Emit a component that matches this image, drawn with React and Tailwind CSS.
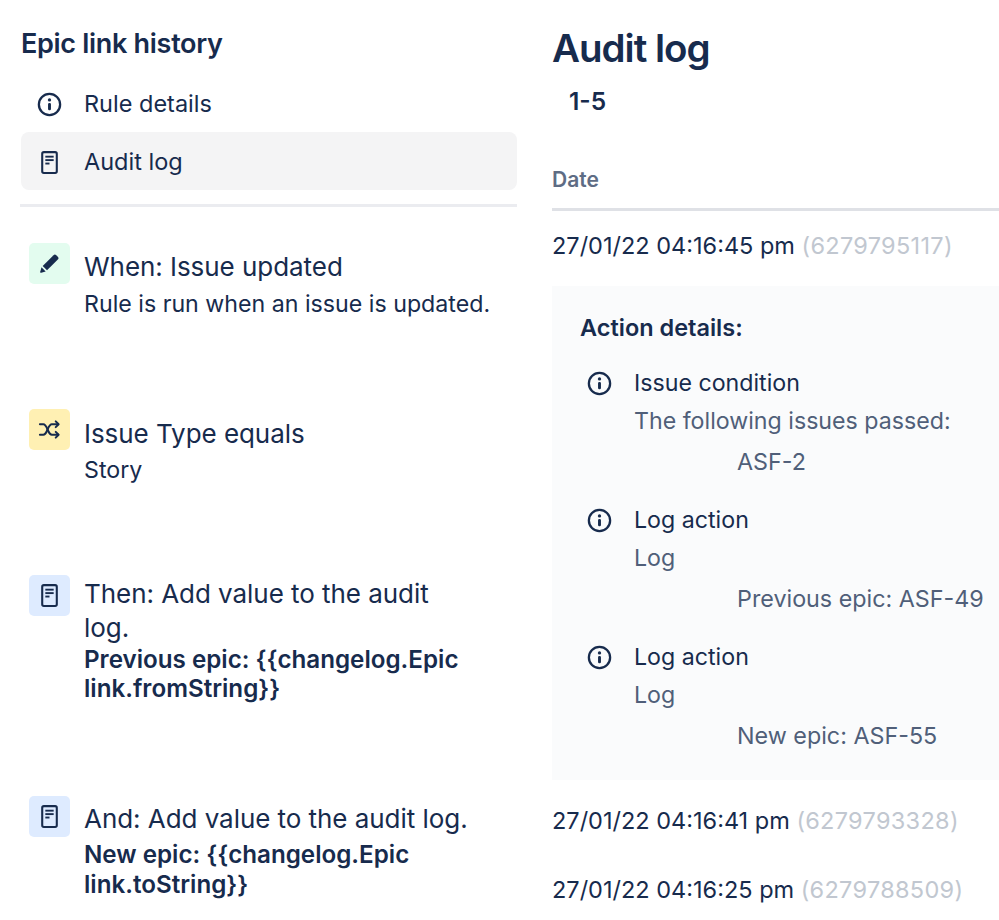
const navy = "text-[#172b4d]";

function InfoIcon({ className = "" }) {
  return (
    <svg viewBox="0 0 24 24" className={className} fill="none">
      <circle cx="12" cy="12" r="10.2" stroke="#172b4d" strokeWidth="2.2" />
      <rect x="10.6" y="10.6" width="2.8" height="7" rx="1.2" fill="#172b4d" />
      <circle cx="12" cy="7.6" r="1.6" fill="#172b4d" />
    </svg>
  );
}

function PageIcon({ className = "" }) {
  return (
    <svg viewBox="0 0 24 24" className={className} fill="none">
      <rect x="5" y="2" width="14" height="20" rx="1.6" stroke="#172b4d" strokeWidth="2" />
      <rect x="8" y="5.5" width="8" height="1.8" fill="#172b4d" />
      <rect x="8" y="8.8" width="8" height="1.8" fill="#172b4d" />
      <rect x="8" y="12.1" width="4" height="1.8" fill="#172b4d" />
    </svg>
  );
}

function PencilIcon({ className = "" }) {
  return (
    <svg viewBox="0 0 24 24" className={className}>
      <path d="M16.2 3.3a2 2 0 0 1 2.8 0l1.7 1.7a2 2 0 0 1 0 2.8L9.4 19.1 4.9 14.6z" fill="#172b4d" />
      <path d="M3.7 16 8 20.3l-4.6 1.4a.9.9 0 0 1-1.1-1.1z" fill="#172b4d" />
    </svg>
  );
}

function ShuffleIcon({ className = "" }) {
  return (
    <svg viewBox="0 0 24 24" className={className} fill="none" stroke="#172b4d" strokeWidth="2.1" strokeLinecap="round" strokeLinejoin="round">
      <path d="M2 6.5h3.5c4.5 0 4.5 11 9 11H21" />
      <path d="M2 17.5h3.5c4.5 0 4.5-11 9-11H21" />
      <path d="M18.5 3.5l3 3-3 3" />
      <path d="M18.5 14.5l3 3-3 3" />
    </svg>
  );
}

function Badge({ bg, children }) {
  return (
    <div className={`w-[41px] h-[41px] shrink-0 rounded-[5px] flex items-center justify-center ${bg}`}>
      {children}
    </div>
  );
}

function Step({ bg, icon, title, children, className = "", bodyClass = "" }) {
  return (
    <div className={`flex pl-2 ${className}`}>
      <Badge bg={bg}>{icon}</Badge>
      <div className={`ml-[14px] min-w-0 ${bodyClass}`}>
        <div className="text-[26px] leading-[34px] tracking-[-0.05px] w-[385px]">{title}</div>
        {children}
      </div>
    </div>
  );
}

function ActionRow({ title, sub, detail }) {
  return (
    <div className="flex h-[137px]">
      <div className="w-[82px] pl-[35px] pt-[7px] shrink-0">
        <InfoIcon className="w-[25px] h-[25px]" />
      </div>
      <div className="min-w-0">
        <div className={`text-[23.2px] leading-[38px] ${navy}`}>{title}</div>
        <div className="text-[23.2px] leading-[38px] text-[#505f79]">{sub}</div>
        <div className="text-[23.3px] leading-[38px] mt-[3px] ml-[103px] whitespace-nowrap text-[#505f79]">{detail}</div>
      </div>
    </div>
  );
}

function LogRow({ date, id, className = "" }) {
  return (
    <div className={`text-[23.5px] leading-[32px] whitespace-nowrap ${navy} ${className}`}>
      {date} <span className="text-[#c1c7d0] tracking-[0.3px]">({id})</span>
    </div>
  );
}

export default function App() {
  return (
    <div className={`w-[999px] h-[920px] overflow-hidden bg-white flex ${navy}`} style={{ fontFamily: "Inter, 'Noto Sans', sans-serif" }}>
      <div className="w-[497px] ml-[20px] shrink-0 pt-[27px]">
        <h2 className="ml-px text-[27px] leading-[34px] font-semibold tracking-[-0.3px]">Epic link history</h2>
        <div className="mt-[14px] h-[57px] pt-px flex items-center pl-[17px]">
          <InfoIcon className="w-[25px] h-[25px]" />
          <span className="ml-[22px] text-[23.5px]">Rule details</span>
        </div>
        <div className="ml-px h-[58px] pt-[2px] flex items-center pl-[16px] bg-[#f4f4f5] rounded-[8px]">
          <PageIcon className="w-[25px] h-[25px]" />
          <span className="ml-[22px] text-[23.5px]">Audit log</span>
        </div>
        <div className="mt-[14px] h-[3px] bg-[#ebecf0]" />

        <Step
          className="mt-[36px] ml-px"
          bodyClass="pt-[7px]"
          bg="bg-[#e3fcef]"
          icon={<PencilIcon className="w-[23px] h-[23px]" />}
          title="When: Issue updated"
        >
          <div className="mt-[2px] text-[23.2px] leading-[36px] whitespace-nowrap">Rule is run when an issue is updated.</div>
        </Step>

        <Step
          className="mt-[87px] ml-px"
          bodyClass="pt-[8px]"
          bg="bg-[#fff0b3]"
          icon={<ShuffleIcon className="w-[23px] h-[23px]" />}
          title="Issue Type equals"
        >
          <div className="mt-[1px] text-[23.2px] leading-[36px]">Story</div>
        </Step>

        <Step
          className="mt-[87px] ml-px"
          bodyClass="pt-[2px]"
          bg="bg-[#deebff]"
          icon={<PageIcon className="w-[25px] h-[25px]" />}
          title="Then: Add value to the audit log."
        >
          <div className="text-[24.2px] leading-[29px] font-semibold w-[400px]">Previous epic: {"{{changelog.Epic link.fromString}}"}</div>
        </Step>

        <Step
          className="mt-[93px] ml-px"
          bodyClass="pt-[6px]"
          bg="bg-[#deebff]"
          icon={<PageIcon className="w-[25px] h-[25px]" />}
          title="And: Add value to the audit log."
        >
          <div className="mt-[4px] text-[24.2px] leading-[30px] font-semibold w-[400px]">New epic: {"{{changelog.Epic link.toString}}"}</div>
        </Step>
      </div>

      <div className="ml-[35px] flex-1 min-w-0 pt-[22px]">
        <h1 className="text-[38.5px] leading-[52px] font-semibold tracking-[-1px]">Audit log</h1>
        <div className="mt-[11px] ml-[17px] text-[24.5px] leading-[32px] font-semibold">1-5</div>
        <div className="mt-[49px] text-[21px] leading-[28px] font-semibold text-[#5e6c84]">Date</div>
        <div className="mt-[14px] h-[3px] bg-[#dfe1e6]" />
        <LogRow className="mt-[19px]" date="27/01/22 04:16:45 pm" id="6279795117" />
        <div className="mt-[24px] h-[494px] bg-[#fafbfc] pt-[26px]">
          <div className="ml-[28px] text-[23.5px] leading-[32px] font-semibold">Action details:</div>
          <div className="mt-[20px]">
            <ActionRow title="Issue condition" sub="The following issues passed:" detail="ASF-2" />
            <ActionRow title="Log action" sub="Log" detail="Previous epic: ASF-49" />
            <ActionRow title="Log action" sub="Log" detail="New epic: ASF-55" />
          </div>
        </div>
        <LogRow className="mt-[25px]" date="27/01/22 04:16:41 pm" id="6279793328" />
        <LogRow className="mt-[37px]" date="27/01/22 04:16:25 pm" id="6279788509" />
      </div>
    </div>
  );
}
